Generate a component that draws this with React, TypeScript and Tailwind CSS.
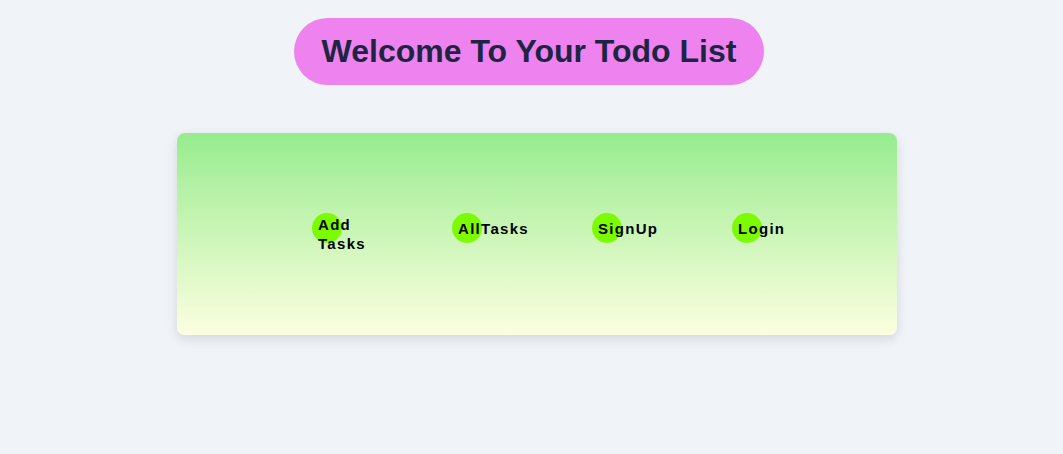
import React from 'react';

const links = [
  { label: 'Add Tasks', pad: 'pt-[2px]' },
  { label: 'AllTasks', pad: 'pt-[6px]' },
  { label: 'SignUp', pad: 'pt-[6px]' },
  { label: 'Login', pad: 'pt-[6px]' },
];

const App: React.FC = () => {
  return (
    <div className="min-h-screen w-full bg-[#f0f4f8] flex flex-col items-center pt-[18px] font-['Liberation_Sans',Arial,sans-serif]">
      {/* Heading pill */}
      <h1 className="mr-[5px] rounded-full bg-[#ee82ee] px-[28px] py-[15px] text-[32px] font-bold leading-[37px] text-[#1c2541]">
        Welcome To Your Todo List
      </h1>

      {/* Nav card */}
      <div className="ml-[11px] mt-[48px] h-[202px] w-[720px] rounded-lg bg-gradient-to-b from-[#95ec8e] to-[#fcfee0] pt-[80px] shadow-[0_4px_12px_rgba(0,0,0,0.12)]">
        <nav className="flex justify-center gap-[110px]">
          {links.map((link) => (
            <a
              key={link.label}
              href="#"
              className={`h-[30px] w-[30px] shrink-0 rounded-full bg-[#7cfc00] pl-[6px] text-[15px] font-bold leading-[19px] tracking-[1.3px] text-black ${link.pad}`}
            >
              {link.label}
            </a>
          ))}
        </nav>
      </div>
    </div>
  );
};

export default App;
